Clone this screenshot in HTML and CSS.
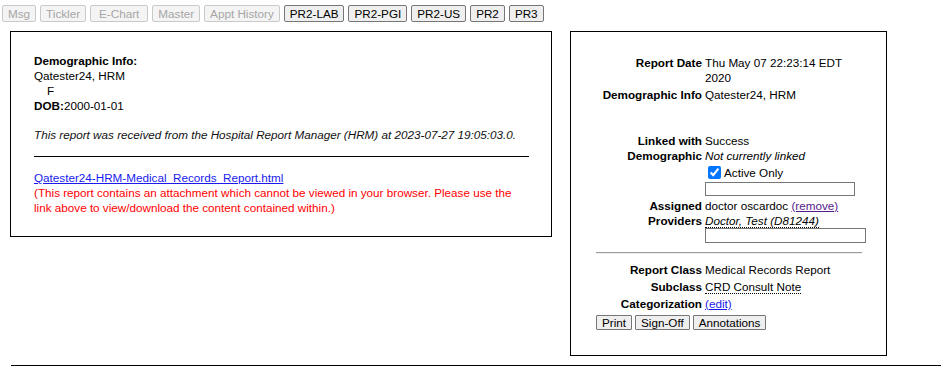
FILE: index.html
```html
<!DOCTYPE html>
<html>
<head>
<meta charset="utf-8">
<link rel="stylesheet" href="styles.css">
</head>
<body>
<div class="toolbar">
  <button class="btn" disabled>Msg</button>
  <button class="btn" disabled>Tickler</button>
  <button class="btn wide" disabled>E-Chart</button>
  <button class="btn" disabled>Master</button>
  <button class="btn" disabled>Appt History</button>
  <button class="btn">PR2-LAB</button>
  <button class="btn">PR2-PGI</button>
  <button class="btn">PR2-US</button>
  <button class="btn">PR2</button>
  <button class="btn">PR3</button>
</div>
<div class="main">
  <div class="report">
    <div class="demo">
      <div class="b">Demographic Info:</div>
      <div>Qatester24, HRM</div>
      <div class="sex">F</div>
      <div><span class="b">DOB:</span>2000-01-01</div>
    </div>
    <p class="received">This report was received from the Hospital Report Manager (HRM) at 2023-07-27 19:05:03.0.</p>
    <hr class="rule">
    <a class="link" href="#">Qatester24-HRM-Medical_Records_Report.html</a>
    <div class="warn">(This report contains an attachment which cannot be viewed in your browser. Please use the link above to view/download the content contained within.)</div>
  </div>
  <div class="side">
    <div class="meta">
      <div class="lbl">Report Date</div>
      <div class="val">Thu May 07 22:23:14 EDT 2020</div>
      <div class="lbl">Demographic Info</div>
      <div class="val">Qatester24, HRM</div>
      <div class="spacer"></div>
      <div class="lbl">Linked with Demographic</div>
      <div class="val">
        <div>Success</div>
        <div class="it">Not currently linked</div>
        <label class="chk"><input type="checkbox" checked> Active Only</label>
        <input class="field f1" type="text">
      </div>
      <div class="lbl">Assigned Providers</div>
      <div class="val">
        <div>doctor oscardoc <a class="visited" href="#">(remove)</a></div>
        <div><span class="it dotted">Doctor, Test (D81244)</span></div>
        <input class="field f2" type="text">
      </div>
      <hr class="grey">
      <div class="lbl">Report Class</div>
      <div class="val">Medical Records Report</div>
      <div class="lbl">Subclass</div>
      <div class="val"><span class="dotted">CRD Consult Note</span></div>
      <div class="lbl">Categorization</div>
      <div class="val"><a class="blue" href="#">(edit)</a></div>
    </div>
    <div class="actions">
      <button class="btn small">Print</button>
      <button class="btn small">Sign-Off</button>
      <button class="btn small">Annotations</button>
    </div>
  </div>
</div>
<div class="below"></div>
</body>
</html>
```
FILE: styles.css
```css
html, body {
  margin: 0;
  padding: 0;
  background: #fff;
}
body {
  font-family: "Liberation Sans", Arial, sans-serif;
  font-size: 11.7px;
  line-height: 15px;
  color: #000;
}
.toolbar {
  display: flex;
  gap: 4px;
  padding: 5px 0 0 2px;
  height: 17px;
}
.btn {
  font-family: "Liberation Sans", Arial, sans-serif;
  font-size: 11.7px;
  line-height: 15px;
  height: 17px;
  padding: 0 5px;
  margin: 0;
  border: 1px solid #767676;
  border-radius: 2px;
  background: #efefef;
  color: #000;
}
.btn.wide {
  padding: 0 8px;
}
.btn:disabled {
  color: #a6a6a6;
  border-color: #c9c9c9;
  background: #f4f4f4;
}
.main {
  display: flex;
  align-items: flex-start;
  gap: 18px;
  padding: 9px 0 0 10px;
}
.report {
  width: 495px;
  border: 1px solid #000;
  padding: 21px 22px 21px 23px;
}
.b { font-weight: bold; }
.sex { padding-left: 13px; }
.received {
  font-style: italic;
  margin: 14px 0 0 0;
  color: #111;
}
.rule {
  border: 0;
  border-top: 1px solid #000;
  margin: 14px 0 13px 0;
  height: 0;
}
.link {
  color: #1a1aee;
  text-decoration: underline;
}
.warn {
  color: #ff0000;
}
.side {
  width: 289px;
  border: 1px solid #000;
  padding: 23px 1px 25px 25px;
}
.meta {
  display: grid;
  grid-template-columns: 106px 162px;
  column-gap: 3px;
  row-gap: 2px;
  width: 271px;
}
.lbl {
  font-weight: bold;
  text-align: right;
}
.it { font-style: italic; }
.dotted {
  border-bottom: 1px dotted #000;
}
.spacer {
  grid-column: 1 / 3;
  height: 27px;
}
.chk {
  display: flex;
  align-items: center;
  height: 19px;
}
.chk input {
  width: 13px;
  height: 13px;
  margin: 0 3px 0 3px;
}
.field {
  display: block;
  box-sizing: border-box;
  border: 1px solid #767676;
  padding: 0;
  margin: 0;
  background: #fff;
}
.f1 { width: 150px; height: 14px; }
.f2 { width: 161px; height: 15px; }
.visited { color: #551a8b; }
.blue { color: #1a1aee; }
hr.grey {
  grid-column: 1 / 3;
  width: 266px;
  border: 0;
  border-top: 1px solid #9a9a9a;
  border-bottom: 1px solid #eee;
  margin: 7px 0 6px 0;
}
.actions {
  display: flex;
  gap: 3px;
  margin-top: 4px;
}
.btn.small {
  font-size: 11.7px;
  height: 15px;
  line-height: 13px;
  border-radius: 1px;
}
.below {
  margin: 9px 0 0 11px;
  border-top: 1px solid #000;
  height: 10px;
}
```
